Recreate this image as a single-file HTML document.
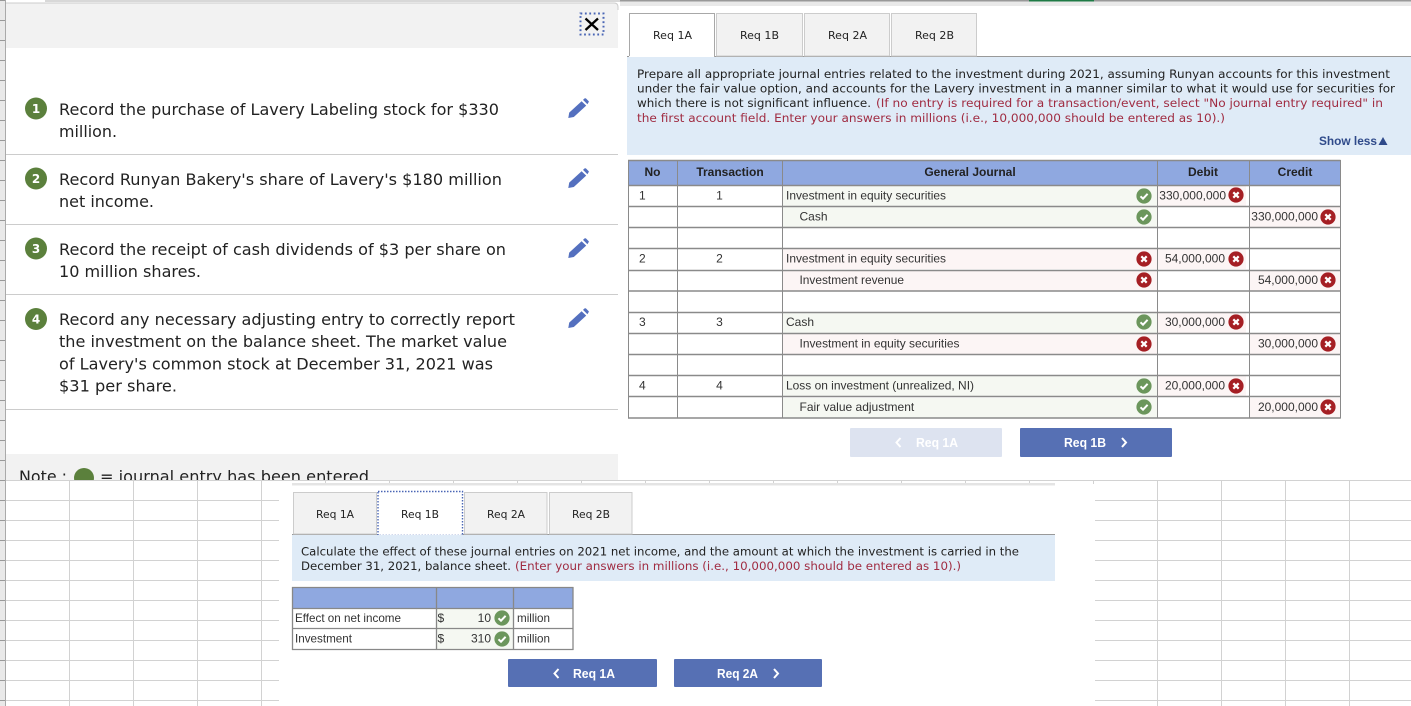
<!DOCTYPE html>
<html><head><meta charset="utf-8"><title>Journal entries</title>
<style>
html,body{margin:0;padding:0;background:#fff;width:1411px;height:706px;overflow:hidden}
svg{display:block}
text{white-space:pre}
.v{font-family:"DejaVu Sans",sans-serif}
.l{font-size:16px;fill:#222}
.d{font-size:11.3px;fill:#222}
.r{font-size:11.3px;fill:#a02c42}
.t{font-size:10.5px;fill:#222}
.a{font-family:"Liberation Sans",Arial,sans-serif;font-size:12px;fill:#333}
.h{font-family:"Liberation Sans",Arial,sans-serif;font-size:12px;font-weight:bold;fill:#222;text-anchor:middle}
.c{text-anchor:middle}
.e{text-anchor:end}
.b{font-family:"Liberation Sans",Arial,sans-serif;font-size:13px;font-weight:bold;fill:#fff}
.n{font-family:"DejaVu Sans",sans-serif;font-size:12px;font-weight:bold;fill:#fff;text-anchor:middle}
</style></head><body>
<svg xmlns="http://www.w3.org/2000/svg" width="1411" height="706" viewBox="0 0 1411 706">
<defs>
<pattern id="g" patternUnits="userSpaceOnUse" x="5" y="480" width="64" height="20">
<path d="M0.5 0V20M0 0.5H64" stroke="#d2d2d2" stroke-width="1" fill="none"/>
</pattern>
<pattern id="s" patternUnits="userSpaceOnUse" x="0" y="0" width="6" height="20">
<rect width="5" height="20" fill="#e9e9e9"/><rect x="5" width="1" height="20" fill="#aaa"/><rect width="5" height="1" fill="#999"/>
</pattern>
<symbol id="ok" viewBox="0 0 16 16" overflow="visible"><circle cx="8" cy="8" r="7.6" fill="#6b965c"/><path d="M4.5 8.3L7 10.7L11.6 5.8" fill="none" stroke="#fff" stroke-width="2"/></symbol>
<symbol id="no" viewBox="0 0 16 16" overflow="visible"><circle cx="8" cy="8" r="7.6" fill="#a51f24"/><path d="M5.3 5.3L10.7 10.7M10.7 5.3L5.3 10.7" fill="none" stroke="#fff" stroke-width="2.2"/></symbol>
<symbol id="pen" viewBox="0 0 21 20"><path d="M0.3 20L1.2 14.6L13.6 3.2L18.2 7.6L5.8 19Z M15 1.9L16.6 0.4Q17.2 0 17.9 0.4L20.6 3.1Q21.1 3.7 20.6 4.3L19.4 6.3Z" fill="#5470bf"/></symbol>
</defs>

<rect width="1411" height="706" fill="#fff"/>
<rect x="0" y="0" width="6" height="706" fill="url(#s)"/>

<!-- top edge -->
<rect x="45" y="0" width="575" height="2" fill="#d8d8d8"/>
<rect x="620" y="0" width="791" height="6" fill="#e9e9e9"/>
<rect x="620" y="0" width="791" height="1.5" fill="#999"/>
<rect x="1029" y="0" width="65" height="1.5" fill="#1e7a45"/>

<!-- left panel -->
<path d="M6 48V3H614Q618 3 618 7V48Z" fill="#f2f2f2"/>
<path d="M6 3H614Q618 3 618 7V10" fill="none" stroke="#ccc"/>
<rect x="580.5" y="13.5" width="23" height="21" fill="none" stroke="#4a66b5" stroke-width="2" stroke-dasharray="1.8 2.6"/>
<path d="M585.5 18.5L598 30M598 18.5L585.5 30" stroke="#000" stroke-width="2.3" fill="none"/>

<circle cx="36" cy="108.500" r="11" fill="#5b803c"/><text class="n" x="36" y="113">1</text>
<circle cx="36" cy="178.500" r="11" fill="#5b803c"/><text class="n" x="36" y="183">2</text>
<circle cx="36" cy="248.500" r="11" fill="#5b803c"/><text class="n" x="36" y="253">3</text>
<circle cx="36" cy="319" r="11" fill="#5b803c"/><text class="n" x="36" y="323.500">4</text>

<g class="v">
<text class="v l" x="59" y="115" textLength="440" lengthAdjust="spacingAndGlyphs">Record the purchase of Lavery Labeling stock for $330</text>
<text class="v l" x="59" y="137" textLength="58" lengthAdjust="spacingAndGlyphs">million.</text>
<text class="v l" x="59" y="185" textLength="443" lengthAdjust="spacingAndGlyphs">Record Runyan Bakery's share of Lavery's $180 million</text>
<text class="v l" x="59" y="207" textLength="95" lengthAdjust="spacingAndGlyphs">net income.</text>
<text class="v l" x="59" y="255" textLength="447" lengthAdjust="spacingAndGlyphs">Record the receipt of cash dividends of $3 per share on</text>
<text class="v l" x="59" y="277" textLength="142" lengthAdjust="spacingAndGlyphs">10 million shares.</text>
<text class="v l" x="59" y="325" textLength="456" lengthAdjust="spacingAndGlyphs">Record any necessary adjusting entry to correctly report</text>
<text class="v l" x="59" y="347" textLength="448" lengthAdjust="spacingAndGlyphs">the investment on the balance sheet. The market value</text>
<text class="v l" x="59" y="369.500" textLength="434" lengthAdjust="spacingAndGlyphs">of Lavery's common stock at December 31, 2021 was</text>
<text class="v l" x="59" y="391.500" textLength="118" lengthAdjust="spacingAndGlyphs">$31 per share.</text>
</g>

<use href="#pen" x="568" y="98" width="21" height="20"/>
<use href="#pen" x="568" y="168" width="21" height="20"/>
<use href="#pen" x="568" y="238" width="21" height="20"/>
<use href="#pen" x="568" y="308" width="21" height="20"/>

<rect x="6" y="154" width="612" height="1" fill="#ccc"/>
<rect x="6" y="224" width="612" height="1" fill="#ccc"/>
<rect x="6" y="294" width="612" height="1" fill="#ccc"/>
<rect x="6" y="409" width="612" height="1" fill="#ccc"/>

<!-- note bar -->
<rect x="6" y="454" width="612" height="26" fill="#f2f2f2"/>
<text class="v l" x="19" y="482" textLength="48" lengthAdjust="spacingAndGlyphs">Note :</text>
<circle cx="84" cy="478" r="10" fill="#5b803c"/>
<text class="v l" x="100" y="482" textLength="269" lengthAdjust="spacingAndGlyphs">= journal entry has been entered</text>

<!-- spreadsheet below -->
<rect x="0" y="480" width="1411" height="226" fill="#fff"/>
<rect x="0" y="0" width="6" height="706" fill="url(#s)"/>
<rect x="6" y="480" width="1405" height="1" fill="#d2d2d2"/>
<rect x="6" y="480" width="273" height="226" fill="url(#g)"/>
<rect x="1095" y="480" width="316" height="226" fill="url(#g)"/>
<path d="M325.500 480V484M389.500 480V484M453.500 480V484M517.500 480V484M581.500 480V484M645.500 480V484M709.500 480V484M773.500 480V484M837.500 480V484M901.500 480V484M965.500 480V484M1029.500 480V484M1093.500 480V484" stroke="#d2d2d2"/>
<rect x="292" y="483" width="763" height="2.500" fill="#e4e4e4"/>

<!-- top right tabs -->
<rect x="627" y="56" width="784" height="1" fill="#999"/>
<rect x="629.500" y="13.500" width="85" height="43" fill="#fff" stroke="#a8a8a8"/>
<rect x="629" y="56" width="85" height="1.500" fill="#fff"/>
<rect x="716.500" y="13.500" width="86" height="42.500" fill="#f2f2f2" stroke="#ccc"/>
<rect x="804.500" y="13.500" width="85" height="42.500" fill="#f2f2f2" stroke="#ccc"/>
<rect x="891.500" y="13.500" width="85" height="42.500" fill="#f2f2f2" stroke="#ccc"/>
<text class="v t" x="653" y="39" textLength="39" lengthAdjust="spacingAndGlyphs">Req 1A</text>
<text class="v t" x="740" y="39" textLength="39" lengthAdjust="spacingAndGlyphs">Req 1B</text>
<text class="v t" x="828" y="39" textLength="39" lengthAdjust="spacingAndGlyphs">Req 2A</text>
<text class="v t" x="915" y="39" textLength="39" lengthAdjust="spacingAndGlyphs">Req 2B</text>

<!-- instructions 1 -->
<rect x="627" y="57" width="784" height="98" fill="#dfebf7"/>
<text class="v d" x="637" y="78" textLength="753" lengthAdjust="spacingAndGlyphs">Prepare all appropriate journal entries related to the investment during 2021, assuming Runyan accounts for this investment</text>
<text class="v d" x="637" y="92.500" textLength="758" lengthAdjust="spacingAndGlyphs">under the fair value option, and accounts for the Lavery investment in a manner similar to what it would use for securities for</text>
<text class="v d" x="637" y="107" textLength="234" lengthAdjust="spacingAndGlyphs">which there is not significant influence.</text>
<text class="v r" x="876" y="107" textLength="507" lengthAdjust="spacingAndGlyphs">(If no entry is required for a transaction/event, select "No journal entry required" in</text>
<text class="v r" x="637" y="122" textLength="588" lengthAdjust="spacingAndGlyphs">the first account field. Enter your answers in millions (i.e., 10,000,000 should be entered as 10).)</text>
<text x="1319" y="145" textLength="58" lengthAdjust="spacingAndGlyphs" style="font-family:'Liberation Sans',sans-serif;font-size:11.500px;font-weight:bold;fill:#2f4a8a">Show less</text>
<path d="M1378.500 145L1383 137L1387.500 145Z" fill="#2f4a8a"/>

<!-- journal table -->
<rect x="628" y="160" width="712" height="25" fill="#8fa8e0"/>
<g>
<rect x="783" y="186" width="374" height="20" fill="#f5f8f2"/>
<rect x="783" y="207" width="374" height="20" fill="#f5f8f2"/>
<rect x="783" y="249" width="374" height="20" fill="#fcf5f5"/>
<rect x="783" y="271" width="374" height="20" fill="#fcf5f5"/>
<rect x="783" y="313" width="374" height="20" fill="#f5f8f2"/>
<rect x="783" y="334" width="374" height="20" fill="#fcf5f5"/>
<rect x="783" y="376" width="374" height="20" fill="#f5f8f2"/>
<rect x="783" y="398" width="374" height="20" fill="#f5f8f2"/>
<rect x="1158" y="186" width="88" height="20" fill="#fcf5f5"/>
<rect x="1158" y="249" width="88" height="20" fill="#fcf5f5"/>
<rect x="1158" y="313" width="88" height="20" fill="#fcf5f5"/>
<rect x="1158" y="376" width="88" height="20" fill="#fcf5f5"/>
<rect x="1250" y="207" width="90" height="20" fill="#fcf5f5"/>
<rect x="1250" y="271" width="90" height="20" fill="#fcf5f5"/>
<rect x="1250" y="334" width="90" height="20" fill="#fcf5f5"/>
<rect x="1250" y="398" width="90" height="20" fill="#fcf5f5"/>
</g>
<path d="M628 160.500H1340.500M628 185.500H1340.500M628 206.500H1340.500M628 227.500H1340.500M628 248.500H1340.500M628 270.500H1340.500M628 291H1340.500M628 312.500H1340.500M628 333.500H1340.500M628 354.500H1340.500M628 375.500H1340.500M628 396.500H1340.500M628 418H1340.500" stroke="#8a8a8a" stroke-width="1.400" fill="none"/>
<path d="M628 160V418.500M677 160V418.500M782 160V418.500M1157 160V418.500M1249 160V418.500M1340 160V418.500" stroke="#8a8a8a" stroke-width="1" fill="none" transform="translate(.5 0)"/>

<text class="h" x="652.500" y="176">No</text>
<text class="h" x="730" y="176">Transaction</text>
<text class="h" x="970" y="176">General Journal</text>
<text class="h" x="1203" y="176">Debit</text>
<text class="h" x="1295" y="176">Credit</text>

<text class="a" x="639" y="199.500">1</text><text class="a c" x="719.500" y="199.500">1</text>
<text class="a" x="639" y="262.500">2</text><text class="a c" x="719.500" y="262.500">2</text>
<text class="a" x="639" y="326">3</text><text class="a c" x="719.500" y="326">3</text>
<text class="a" x="639" y="389.500">4</text><text class="a c" x="719.500" y="389.500">4</text>

<text class="a" x="786" y="199.500" textLength="160" lengthAdjust="spacingAndGlyphs">Investment in equity securities</text>
<text class="a" x="799.500" y="220.500">Cash</text>
<text class="a" x="786" y="262.500" textLength="160" lengthAdjust="spacingAndGlyphs">Investment in equity securities</text>
<text class="a" x="799.500" y="284" textLength="104.500" lengthAdjust="spacingAndGlyphs">Investment revenue</text>
<text class="a" x="786" y="326">Cash</text>
<text class="a" x="799.500" y="347.500" textLength="160" lengthAdjust="spacingAndGlyphs">Investment in equity securities</text>
<text class="a" x="786" y="389.500" textLength="188" lengthAdjust="spacingAndGlyphs">Loss on investment (unrealized, NI)</text>
<text class="a" x="799.500" y="411">Fair value adjustment</text>

<text class="a e" x="1226" y="199.500">330,000,000</text>
<text class="a e" x="1318" y="220.500">330,000,000</text>
<text class="a e" x="1225" y="262.500">54,000,000</text>
<text class="a e" x="1318" y="284">54,000,000</text>
<text class="a e" x="1225" y="326">30,000,000</text>
<text class="a e" x="1318" y="347.500">30,000,000</text>
<text class="a e" x="1225" y="389.500">20,000,000</text>
<text class="a e" x="1318" y="411">20,000,000</text>

<use href="#ok" x="1136" y="188" width="16" height="16"/>
<use href="#ok" x="1136" y="209" width="16" height="16"/>
<use href="#no" x="1136" y="251" width="16" height="16"/>
<use href="#no" x="1136" y="272" width="16" height="16"/>
<use href="#ok" x="1136" y="314" width="16" height="16"/>
<use href="#no" x="1136" y="336" width="16" height="16"/>
<use href="#ok" x="1136" y="378" width="16" height="16"/>
<use href="#ok" x="1136" y="399" width="16" height="16"/>
<use href="#no" x="1228" y="187" width="16" height="16"/>
<use href="#no" x="1228" y="251" width="16" height="16"/>
<use href="#no" x="1228" y="314" width="16" height="16"/>
<use href="#no" x="1228" y="378" width="16" height="16"/>
<use href="#no" x="1320" y="209" width="16" height="16"/>
<use href="#no" x="1320" y="272" width="16" height="16"/>
<use href="#no" x="1320" y="336" width="16" height="16"/>
<use href="#no" x="1320" y="399" width="16" height="16"/>

<!-- buttons top -->
<rect x="850" y="428" width="152" height="29" rx="1" fill="#dde3f0"/>
<path d="M900.500 438L896.500 442.500L900.500 447" fill="none" stroke="#fff" stroke-width="2"/>
<text class="b" x="916" y="447" textLength="42" lengthAdjust="spacingAndGlyphs">Req 1A</text>
<rect x="1020" y="428" width="152" height="29" rx="1" fill="#5670b4"/>
<text class="b" x="1064" y="447" textLength="42" lengthAdjust="spacingAndGlyphs">Req 1B</text>
<path d="M1122 438L1126 442.500L1122 447" fill="none" stroke="#fff" stroke-width="2"/>

<!-- second panel tabs -->
<rect x="292" y="534" width="763" height="1" fill="#999"/>
<rect x="293.500" y="492.500" width="83" height="41.500" fill="#f2f2f2" stroke="#ccc"/>
<rect x="378" y="491.500" width="84.500" height="44" fill="#fff" stroke="#4a66b5" stroke-width="1.400" stroke-dasharray="1.500 1.500"/>
<rect x="464.500" y="492.500" width="82.500" height="41.500" fill="#f2f2f2" stroke="#ccc"/>
<rect x="549.500" y="492.500" width="82.500" height="41.500" fill="#f2f2f2" stroke="#ccc"/>
<text class="v t" x="316" y="518" textLength="38" lengthAdjust="spacingAndGlyphs">Req 1A</text>
<text class="v t" x="401" y="518" textLength="38" lengthAdjust="spacingAndGlyphs">Req 1B</text>
<text class="v t" x="487" y="518" textLength="38" lengthAdjust="spacingAndGlyphs">Req 2A</text>
<text class="v t" x="572" y="518" textLength="38" lengthAdjust="spacingAndGlyphs">Req 2B</text>

<!-- instructions 2 -->
<rect x="292" y="535" width="763" height="46" fill="#dfebf7"/>
<text class="v d" x="301" y="555.500" textLength="718" lengthAdjust="spacingAndGlyphs">Calculate the effect of these journal entries on 2021 net income, and the amount at which the investment is carried in the</text>
<text class="v d" x="301" y="570" textLength="210" lengthAdjust="spacingAndGlyphs">December 31, 2021, balance sheet.</text>
<text class="v r" x="515" y="570" textLength="446" lengthAdjust="spacingAndGlyphs">(Enter your answers in millions (i.e., 10,000,000 should be entered as 10).)</text>

<!-- small table -->
<rect x="292" y="587" width="281" height="21" fill="#8fa8e0"/>
<rect x="437" y="609" width="76" height="40" fill="#f5f8f2"/>
<path d="M292 587.500H573.500M292 608.500H573.500M292 628.500H573.500M292 649.500H573.500M292.500 587V650M436.500 587V650M513.500 587V650M573 587V650" stroke="#888" stroke-width="1.300" fill="none"/>
<text class="a" x="295" y="622" textLength="106" lengthAdjust="spacingAndGlyphs">Effect on net income</text>
<text class="a" x="295" y="642.500" textLength="57" lengthAdjust="spacingAndGlyphs">Investment</text>
<text class="a" x="437.500" y="622">$</text>
<text class="a" x="437.500" y="642.500">$</text>
<text class="a e" x="491" y="622">10</text>
<text class="a e" x="491" y="642.500">310</text>
<use href="#ok" x="494" y="610" width="16" height="16"/>
<use href="#ok" x="494" y="631" width="16" height="16"/>
<text class="a" x="517" y="622" textLength="33" lengthAdjust="spacingAndGlyphs">million</text>
<text class="a" x="517" y="642.500" textLength="33" lengthAdjust="spacingAndGlyphs">million</text>

<!-- buttons bottom -->
<rect x="508" y="659" width="149" height="28" rx="1" fill="#5670b4"/>
<path d="M558.500 669L554.500 673.500L558.500 678" fill="none" stroke="#fff" stroke-width="2"/>
<text class="b" x="573" y="678" textLength="42" lengthAdjust="spacingAndGlyphs">Req 1A</text>
<rect x="674" y="659" width="148" height="28" rx="1" fill="#5670b4"/>
<text class="b" x="717" y="678" textLength="41" lengthAdjust="spacingAndGlyphs">Req 2A</text>
<path d="M774 669L778 673.500L774 678" fill="none" stroke="#fff" stroke-width="2"/>
</svg>
</body></html>
